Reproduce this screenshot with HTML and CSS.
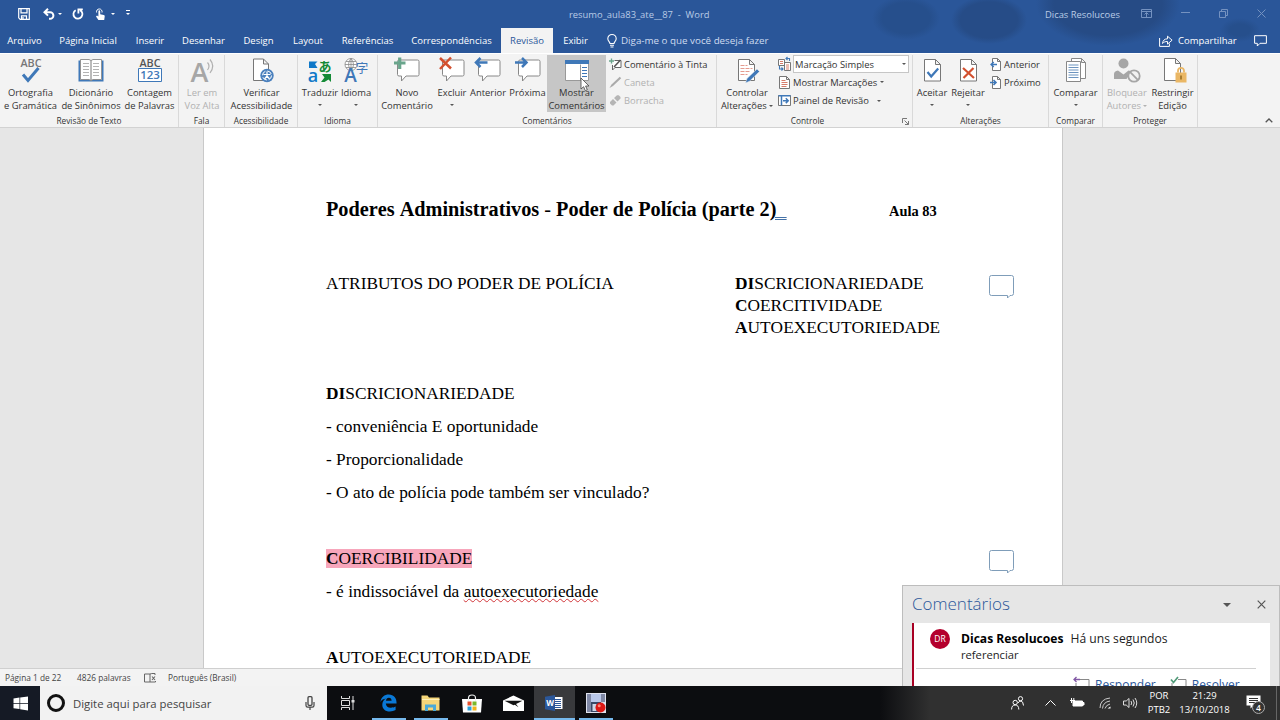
FILE: index.html
```html
<!DOCTYPE html>
<html lang="pt-BR">
<head>
    <meta charset="UTF-8">
    <meta name="viewport" content="width=device-width, initial-scale=1.0">
    <title>resumo_aula83_ate__87 - Word</title>
    <link rel="stylesheet" href="styles.css">
</head>
<body>
    <!-- Title bar and ribbon tabs -->
    <div class="top">
        <header class="titlebar">
            <div class="quick">
                <svg class="q-save" width="12" height="12" viewBox="0 0 12 12"><path d="M.7.7h10.6v10.6H2.2L.7 9.8z M3 .7v4.1h6V.7 M3.5 11.3V7.8h5v3.5 M5 9v2" fill="none" stroke="#fff" stroke-width="1.2"/></svg>
                <svg class="q-undo" width="12" height="12" viewBox="0 0 12 12"><path d="M1.500 4.200h5.600a3.300 3.300 0 0 1 0 6.600H6 M5 .8L1.500 4.200 5 7.600" fill="none" stroke="#fff" stroke-width="2"/></svg>
                <i class="caret"></i>
                <svg class="q-redo" width="12" height="12" viewBox="0 0 12 12"><path d="M3.700 2.200A4.500 4.500 0 1 0 8 2.100 M6.400 5.600V1.400h4.400" fill="none" stroke="#fff" stroke-width="1.800"/></svg>
                <svg class="q-touch" width="11" height="13" viewBox="0 0 11 13"><path d="M3.400 12L1 8.400l1-.9 1.400 1V3.200c0-1.200 1.800-1.200 1.800 0v3l3.600.9c.8.2 1 .7.9 1.400L9.200 12z" fill="#fff"/><path d="M1.600 4.500a2.800 2.800 0 1 1 5.400 0" fill="none" stroke="#fff"/></svg>
                <i class="caret"></i>
                <i class="caret more"></i>
            </div>
            <div class="doc-name">resumo_aula83_ate__87&nbsp; -&nbsp; Word</div>
            <div class="user">Dicas Resolucoes</div>
            <div class="window-buttons">
                <svg width="11" height="9" viewBox="0 0 11 9"><path d="M.5.5h10v8H.5z M.5 2.500h10 M5.500 8V4 M3.500 5.500l2-2 2 2" fill="none" stroke="currentColor"/></svg>
                <svg width="9" height="9" viewBox="0 0 9 9"><path d="M0 3.500h9" stroke="currentColor"/></svg>
                <svg width="9" height="9" viewBox="0 0 9 9"><path d="M.5 2.500h6v6h-6z M2.500 2.500v-2h6v6h-2" fill="none" stroke="currentColor"/></svg>
                <svg width="9" height="9" viewBox="0 0 9 9"><path d="M.5.5l8 8 M8.500.5l-8 8" stroke="currentColor"/></svg>
            </div>
        </header>
        <nav class="tabs">
            <a class="tab w-arquivo">Arquivo</a>
            <a class="tab w-inicial">Página Inicial</a>
            <a class="tab w-inserir">Inserir</a>
            <a class="tab w-desenhar">Desenhar</a>
            <a class="tab w-design">Design</a>
            <a class="tab w-layout">Layout</a>
            <a class="tab w-ref">Referências</a>
            <a class="tab w-corr">Correspondências</a>
            <a class="tab w-rev active">Revisão</a>
            <a class="tab w-exibir">Exibir</a>
            <a class="tell-me">
                <svg width="10" height="14" viewBox="0 0 10 14"><path d="M3 9.500C3 8 .8 7 .8 4.700a4.200 4.200 0 0 1 8.400 0C9.200 7 7 8 7 9.500z M3 11.300h4 M3.500 13h3" fill="none" stroke="#fff" stroke-width="1.100"/></svg>
                Diga-me o que você deseja fazer
            </a>
            <a class="share">
                <svg width="14" height="12" viewBox="0 0 14 12"><path d="M.6 3v8.400h9.800V8.500 M3.500 8.500c.3-3 2-4.700 5-4.700V1.200l4.600 4-4.600 3.900V6.500c-2.300 0-3.600.5-5 2z" fill="none" stroke="#fff"/></svg>
                Compartilhar
            </a>
            <a class="notes"><svg width="13" height="12" viewBox="0 0 13 12"><path d="M.6.7h11.800v7.600H6l-2.700 2.700V8.300H.6z" fill="none" stroke="#fff"/></svg></a>
        </nav>
    </div>

    <!-- Ribbon -->
    <section class="ribbon">
        <div class="group g-texto">
            <div class="tools">
                <div class="tool b61">
                    <svg width="26" height="26" viewBox="0 0 26 26"><text x="13" y="9.500" class="abc gray">ABC</text><path d="M5 17.500l5 6L20.500 11" fill="none" stroke="#3f78b8" stroke-width="3"/></svg>
                    <span>Ortografia<br>e Gramática</span>
                </div>
                <div class="tool b60">
                    <svg width="26" height="26" viewBox="0 0 26 26"><path d="M.5 3.500H2v19h22v-19h1.500v21H.5z" fill="#3f78b8"/><path d="M2.500 2.500H11l2 1 2-1h8.500v20H15l-2 1-2-1H2.500z" fill="#fff" stroke="#888" stroke-width=".9"/><path d="M13 3.500v20" stroke="#777"/><path d="M5 6.500h6M5 9.500h6M5 12.500h6M5 15.500h6M5 18.500h6M15 6.500h6M15 9.500h6M15 12.500h6M15 15.500h6M15 18.500h6" stroke="#aaa" stroke-width=".9"/></svg>
                    <span>Dicionário<br>de Sinônimos</span>
                </div>
                <div class="tool b57">
                    <svg width="26" height="26" viewBox="0 0 26 26"><text x="13" y="9.500" class="abc dark">ABC</text><path d="M1.500 11.500h23v13h-23z" fill="#fff" stroke="#3f78b8"/><text x="13" y="22.300" class="abc blue">123</text></svg>
                    <span>Contagem<br>de Palavras</span>
                </div>
            </div>
            <div class="caption">Revisão de Texto</div>
        </div>

        <div class="group g-fala">
            <div class="tools">
                <div class="tool b46 off">
                    <svg width="26" height="26" viewBox="0 0 26 26"><text x="10.500" y="25" class="big-a">A</text><path d="M18.500 5.500q3 3.500 0 7.500 M21 2.500q5.500 6.500 0 13.500" fill="none" stroke="#b0b0b0" stroke-width="1.200"/></svg>
                    <span>Ler em<br>Voz Alta</span>
                </div>
            </div>
            <div class="caption">Fala</div>
        </div>

        <div class="group g-acess">
            <div class="tools">
                <div class="tool b73">
                    <svg width="26" height="26" viewBox="0 0 26 26"><path d="M4.500 2h10l5 5v16.500h-15z M14.500 2v5h5" fill="#fff" stroke="#777"/><circle cx="18" cy="18.500" r="6.700" fill="#4a80bd"/><circle cx="18" cy="18.500" r="4.500" fill="none" stroke="#fff" stroke-dasharray="5 2"/><path d="M18 14.500v4.500 M14.500 17.500h7 M18 19l-2.500 3 M18 19l2.500 3" stroke="#fff" stroke-width="1.200"/></svg>
                    <span>Verificar<br>Acessibilidade</span>
                </div>
            </div>
            <div class="caption">Acessibilidade</div>
        </div>

        <div class="group g-idioma">
            <div class="tools">
                <div class="tool b38">
                    <svg width="26" height="26" viewBox="0 0 26 26"><path d="M2 4.500h8.500l-2.500 2.500 2.500 4H2z" fill="#0f78c8"/><path d="M15 17h9v8l-2.500-2.500-4 2.500H14l3.500-4.500z" fill="#138a36"/><text x="18" y="13.500" class="kana">あ</text><text x="6" y="24.500" class="lat-a">a</text></svg>
                    <span>Traduzir</span><i class="caret"></i>
                </div>
                <div class="tool b34">
                    <svg width="26" height="26" viewBox="0 0 26 26"><circle cx="8" cy="7.500" r="6" fill="#fff" stroke="#888" stroke-width=".8"/><path d="M2 7.500h12M8 1.500v12M3 4.500h10M3 10.500h10M8 1.500q-5 6 0 12M8 1.500q5 6 0 12" fill="none" stroke="#888" stroke-width=".8"/><text x="7.500" y="24.500" class="idiom-a">A</text><text x="19" y="15.500" class="kanji">字</text></svg>
                    <span>Idioma</span><i class="caret"></i>
                </div>
            </div>
            <div class="caption">Idioma</div>
        </div>

        <div class="group g-coment">
            <div class="tools">
                <div class="tool b58">
                    <svg width="28" height="26" viewBox="0 0 28 26"><path d="M4.500 4.500q0-1.500 1.500-1.500h18.500q1.500 0 1.500 1.500v13q0 1.500-1.500 1.500H13l-4.500 5v-5H6q-1.500 0-1.500-1.500z" fill="#fff" stroke="#888"/><path d="M1 6h11.500 M6.700.5v11.500" stroke="#69a58c" stroke-width="3.200"/></svg>
                    <span>Novo<br>Comentário</span>
                </div>
                <div class="tool b32">
                    <svg width="28" height="26" viewBox="0 0 28 26"><path d="M4.500 4.500q0-1.500 1.500-1.500h18.500q1.500 0 1.500 1.500v13q0 1.500-1.500 1.500H13l-4.500 5v-5H6q-1.500 0-1.500-1.500z" fill="#fff" stroke="#888"/><path d="M2 1l11 10.500 M13 .5L2 12" stroke="#d3502f" stroke-width="2.500"/></svg>
                    <span>Excluir</span><i class="caret"></i>
                </div>
                <div class="tool b40">
                    <svg width="28" height="26" viewBox="0 0 28 26"><path d="M4.500 4.500q0-1.500 1.500-1.500h18.500q1.500 0 1.500 1.500v13q0 1.500-1.500 1.500H13l-4.500 5v-5H6q-1.500 0-1.500-1.500z" fill="#fff" stroke="#888"/><path d="M2 5.500h11.500 M6.500 1L2 5.500 6.500 10" fill="none" stroke="#3f78b8" stroke-width="2.500"/></svg>
                    <span>Anterior</span>
                </div>
                <div class="tool b39">
                    <svg width="28" height="26" viewBox="0 0 28 26"><path d="M4.500 4.500q0-1.500 1.500-1.500h18.500q1.500 0 1.500 1.500v13q0 1.500-1.500 1.500H13l-4.500 5v-5H6q-1.500 0-1.500-1.500z" fill="#fff" stroke="#888"/><path d="M1 5.500h11.500 M8 1l4.500 4.500L8 10" fill="none" stroke="#3f78b8" stroke-width="2.500"/></svg>
                    <span>Próxima</span>
                </div>
                <div class="tool b59 pressed">
                    <svg width="26" height="26" viewBox="0 0 26 26"><path d="M1.500 3.500h23v20h-23z" fill="#fff" stroke="#999"/><path d="M1 3h24v4H1z" fill="#3f78b8"/><path d="M16.500 7.500v16" stroke="#999"/><path d="M18 10.500h5M18 13.500h5M18 16.500h5M18 19.500h5" stroke="#3f78b8"/></svg>
                    <span>Mostrar<br>Comentários</span>
                    <svg class="pointer" width="11" height="15" viewBox="0 0 11 15"><path d="M1 1v11l2.600-2.300 1.700 4 2-.9-1.700-3.800H9z" fill="#fff" stroke="#444" stroke-width=".8"/></svg>
                </div>
                <div class="side s-tinta">
                    <div class="row"><svg width="13" height="13" viewBox="0 0 13 13"><path d="M5.500 2.500H12v7H6l-2.500 2.500V7" fill="#fff" stroke="#666"/><path d="M0 3h5M2.500.5v5" stroke="#69a58c" stroke-width="1.300"/><path d="M5 9l6.500-7" stroke="#555" stroke-width="1.500"/></svg>Comentário à Tinta</div>
                    <div class="row off"><svg width="13" height="13" viewBox="0 0 13 13"><path d="M.5 12l2-3.500L10.800.8l1.400 1.400L4 10z" fill="#aaa"/></svg>Caneta</div>
                    <div class="row off"><svg width="13" height="13" viewBox="0 0 13 13"><path d="M1 8l3-3 3.500 3.500-3 3H3L1 9.500z M5 4l3-2.800h1.700L11.500 3v1.500l-3 3z" fill="#b5b5b5"/></svg>Borracha</div>
                </div>
            </div>
            <div class="caption">Comentários</div>
        </div>

        <div class="group g-controle">
            <div class="tools">
                <div class="tool b60">
                    <svg width="26" height="26" viewBox="0 0 26 26"><path d="M4.500 2.500h11l5 5v16h-16z M15.500 2.500v5h5" fill="#fff" stroke="#777"/><path d="M6.500 8.500h7M6.500 11.500h12M6.500 14.500h9M6.500 17.500h7" stroke="#e59b8f" stroke-dasharray="4 1"/><path d="M11.500 26l1.500-4.500L23 12l2.500 2.500-10 9.700z" fill="#3f78b8" stroke="#f3f3f3" stroke-width=".5"/></svg>
                    <span>Controlar<br>Alterações <i class="caret inline"></i></span>
                </div>
                <div class="side s-controle">
                    <div class="row"><svg width="13" height="14" viewBox="0 0 13 14"><path d="M.5 2.500h6v6h-6z M6.500 5.500h6v8h-6z" fill="#fff" stroke="#777"/><path d="M2 4.500h3M2 6.500h3M8 8h3M8 10h3M8 12h3" stroke="#d77c6b"/><path d="M1.500 9v3h3 M3.500 10.500L5 12l-1.500 1.500 M11.500 4V1.500h-3 M9.500 0L8 1.500 9.500 3" fill="none" stroke="#3f78b8" stroke-width="1.100"/></svg>
                        <div class="combo">Marcação Simples<i class="caret"></i></div></div>
                    <div class="row"><svg width="13" height="13" viewBox="0 0 13 13"><path d="M1.500.5h7l3 3v9h-10z M8.500.5v3h3" fill="#fff" stroke="#777"/><path d="M3.500 4.500h4M3.500 6.500h6M3.500 8.500h6M3.500 10.500h5" stroke="#d77c6b"/></svg>Mostrar Marcações<i class="caret"></i></div>
                    <div class="row"><svg width="13" height="13" viewBox="0 0 13 13"><path d="M.5 1.500h12v10H.5z" fill="#fff" stroke="#777"/><path d="M.5 1.800h12M3.500 2v9.500" stroke="#3f78b8" stroke-width="1.500"/><path d="M5 6.700h5M7.800 4.300l2.400 2.400-2.400 2.400" fill="none" stroke="#3f78b8" stroke-width="1.500"/></svg>Painel de Revisão<i class="caret far"></i></div>
                </div>
            </div>
            <div class="caption with-launcher">Controle
                <svg class="launcher" width="7" height="7" viewBox="0 0 7 7"><path d="M.5 5V.5H5 M2.500 2.500l4 4 M6.500 3v3.500H3" fill="none" stroke="#777"/></svg>
            </div>
        </div>

        <div class="group g-alter">
            <div class="tools">
                <div class="tool b36">
                    <svg width="26" height="26" viewBox="0 0 26 26"><path d="M5.500 2.500h11l5 5v16.500h-16z M16.500 2.500v5h5" fill="#fff" stroke="#777"/><path d="M8.500 15l3.700 4.500 7-8" fill="none" stroke="#3f78b8" stroke-width="2.200"/></svg>
                    <span>Aceitar</span><i class="caret"></i>
                </div>
                <div class="tool b36">
                    <svg width="26" height="26" viewBox="0 0 26 26"><path d="M5.500 2.500h11l5 5v16.500h-16z M16.500 2.500v5h5" fill="#fff" stroke="#777"/><path d="M8 11l11 10M18.500 11L8.500 21" stroke="#d3502f" stroke-width="2.200"/></svg>
                    <span>Rejeitar</span><i class="caret"></i>
                </div>
                <div class="side s-alter">
                    <div class="row"><svg width="12" height="13" viewBox="0 0 12 13"><path d="M2.500.5h5l3 3v9h-8z M7.500.5v3h3" fill="#fff" stroke="#777"/><path d="M1 6.500h6M3.700 4L1.200 6.500 3.700 9" fill="none" stroke="#3f78b8" stroke-width="1.600"/></svg>Anterior</div>
                    <div class="row"><svg width="12" height="13" viewBox="0 0 12 13"><path d="M2.500.5h5l3 3v9h-8z M7.500.5v3h3" fill="#fff" stroke="#777"/><path d="M0 6.500h6M3.500 4L6 6.500 3.500 9" fill="none" stroke="#3f78b8" stroke-width="1.600"/></svg>Próximo</div>
                </div>
            </div>
            <div class="caption">Alterações</div>
        </div>

        <div class="group g-comparar">
            <div class="tools">
                <div class="tool b53">
                    <svg width="26" height="26" viewBox="0 0 26 26"><path d="M8.500 1.500h10l4 4v16h-14z M18.500 1.500v4h4" fill="#fff" stroke="#888"/><path d="M3.500 4.500h14v20h-14z" fill="#fff" stroke="#888"/><path d="M5.500 8h10M5.500 10.500h10M5.500 13h10M5.500 15.500h10M5.500 18h10M5.500 20.500h10" stroke="#6d94bf"/></svg>
                    <span>Comparar</span><i class="caret"></i>
                </div>
            </div>
            <div class="caption">Comparar</div>
        </div>

        <div class="group g-proteger">
            <div class="tools">
                <div class="tool b46 off">
                    <svg width="28" height="26" viewBox="0 0 28 26"><circle cx="10.500" cy="6.500" r="5" fill="#a6a6a6"/><path d="M1 22v-5q0-3 4-3.500l5.500 4 5-4q2 .2 3 1.500l-5 7z" fill="#a6a6a6"/><circle cx="21" cy="19" r="5.700" fill="#f3f3f3" stroke="#a6a6a6" stroke-width="1.800"/><path d="M17.200 15.200l7.600 7.600" stroke="#a6a6a6" stroke-width="1.800"/></svg>
                    <span>Bloquear<br>Autores <i class="caret inline"></i></span>
                </div>
                <div class="tool b45">
                    <svg width="28" height="26" viewBox="0 0 28 26"><path d="M5.500 1.500h11l5 5v17h-16z M16.500 1.500v5h5" fill="#fff" stroke="#777"/><path d="M19 15.500v-1.700a3 3 0 0 1 6 0v1.700" fill="none" stroke="#eab765" stroke-width="1.800"/><path d="M16.500 15.500h11v10h-11z" fill="#eab765"/><path d="M22 18.500v4" stroke="#8a6218" stroke-width="1.400"/></svg>
                    <span>Restringir<br>Edição</span>
                </div>
            </div>
            <div class="caption">Proteger</div>
        </div>
        <svg class="collapse" width="8" height="5" viewBox="0 0 8 5"><path d="M.7 4.300L4 1l3.300 3.300" fill="none" stroke="#555" stroke-width="1.300"/></svg>
    </section>

    <!-- Document -->
    <main class="canvas">
        <article class="page">
            <div class="heading">
                <h1>Poderes Administrativos <b class="thin">-</b> Poder de Polícia (parte 2<span class="grammar">)&nbsp;&nbsp;</span></h1>
                <b>Aula 83</b>
            </div>
            <div class="columns">
                <div>ATRIBUTOS DO PODER DE POLÍCIA</div>
                <div><b>DI</b>SCRICIONARIEDADE<br><b>C</b>OERCITIVIDADE<br><b>A</b>UTOEXECUTORIEDADE</div>
            </div>
            <p><b>DI</b>SCRICIONARIEDADE</p>
            <p>- conveniência E oportunidade</p>
            <p>- Proporcionalidade</p>
            <p>- O ato de polícia pode também ser vinculado?</p>
            <p>&nbsp;</p>
            <p><mark><b>C</b>OERCIBILIDADE</mark></p>
            <p>- é indissociável da <span class="typo">autoexecutoriedade</span></p>
            <p>&nbsp;</p>
            <p><b>A</b>UTOEXECUTORIEDADE</p>
            <svg class="balloon first" width="25" height="25" viewBox="0 0 25 25"><path d="M2.500.5h20q2 0 2 2v16q0 2-2 2h-1.500L18.500 23v-2.500h-16q-2 0-2-2v-16q0-2 2-2z" fill="#fff" stroke="#7f9db9"/></svg>
            <svg class="balloon second" width="25" height="25" viewBox="0 0 25 25"><path d="M2.500.5h20q2 0 2 2v16q0 2-2 2h-1.500L18.500 23v-2.500h-16q-2 0-2-2v-16q0-2 2-2z" fill="#fff" stroke="#7f9db9"/></svg>
        </article>
    </main>

    <!-- Comments pane -->
    <aside class="pane">
        <div class="pane-head">
            <h2>Comentários</h2>
            <i class="caret"></i>
            <svg width="9" height="9" viewBox="0 0 9 9"><path d="M.7.7l7.600 7.600M8.300.7L.7 8.300" stroke="#555" stroke-width="1.200"/></svg>
        </div>
        <div class="card">
            <div class="comment">
                <div class="avatar">DR</div>
                <div>
                    <div class="who"><b>Dicas Resolucoes</b> Há uns segundos</div>
                    <div class="said">referenciar</div>
                </div>
            </div>
            <div class="actions">
                <a><svg width="17" height="16" viewBox="0 0 17 16"><path d="M6 3.500h10v10H3V7" fill="none" stroke="#888"/><path d="M1 3.500h6M3.500 1L1 3.500 3.500 6" fill="none" stroke="#8259a5" stroke-width="1.300"/></svg>Responder</a>
                <a><svg width="17" height="16" viewBox="0 0 17 16"><path d="M8 3.500h8v10H2V7" fill="none" stroke="#888"/><path d="M1 3.500L3.500 6.500 8 1" fill="none" stroke="#4f9a77" stroke-width="1.700"/></svg>Resolver</a>
            </div>
        </div>
    </aside>

    <!-- Status bar -->
    <footer class="status">
        <span class="st-page">Página 1 de 22</span>
        <span class="st-words">4826 palavras</span>
        <svg width="12" height="10" viewBox="0 0 12 10"><path d="M6 1H.5v8H6V1q1-.7 5-.5v1.500 M6 9h5.500V8" fill="none" stroke="#666"/><path d="M8 3.500l3 3.500M11 3.500L8 7" stroke="#666" stroke-width="1.100"/></svg>
        <span>Português (Brasil)</span>
    </footer>

    <!-- Taskbar -->
    <div class="taskbar">
        <div class="start"><svg width="15" height="15" viewBox="0 0 15 15"><path d="M.5 2.500l6-.9v5.400h-6z M7.200 1.500L15 .4V7H7.200z M.5 7.700h6v5.400l-6-.9z M7.200 7.700H15v6.700l-7.800-1.100z" fill="#fff"/></svg></div>
        <div class="search">
            <i class="cortana"></i>
            <span>Digite aqui para pesquisar</span>
            <svg width="10" height="15" viewBox="0 0 10 15"><rect x="3" y=".7" width="4" height="8.600" rx="1" fill="none" stroke="#444" stroke-width="1.300"/><path d="M1 6v3.500q0 1.700 1.700 1.700h4.600Q9 11.200 9 9.500V6 M5 11v3" fill="none" stroke="#444" stroke-width="1.200"/></svg>
        </div>
        <div class="apps">
            <div class="app"><svg width="15" height="14" viewBox="0 0 15 14"><path d="M1.500 0v2.500h8V0 M1.500 4.500h8v5h-8z M1.500 14v-2.500h8V14 M13 0v14" fill="none" stroke="#ddd"/><path d="M11.500 4h3v2.500h-3z" fill="#ddd"/></svg></div>
            <div class="app open"><svg width="17" height="18" viewBox="0 0 17 18"><path d="M.5 8C1 3 4.500.4 8.800.4c5 0 8 3.600 7.800 9.100H5.800c.2 2.800 2.200 4.200 5 4.200 1.900 0 3.400-.4 4.800-1.200v3.600c-1.700.9-3.500 1.400-5.700 1.400-5 0-7.600-3-7.600-6.800 0-2.700 1.500-4.900 3.700-6.100C3.500 5 1.600 6 .5 8z M6 6.700h5.600c0-1.800-1-2.900-2.700-2.900C7.200 3.800 6.200 5 6 6.700z" fill="#0a78d6" fill-rule="evenodd"/></svg></div>
            <div class="app open"><svg width="19" height="16" viewBox="0 0 19 16"><path d="M.5.5h6l1.500 2h10.500v13H.5z" fill="#f5d679"/><path d="M1 4.500h17.500" stroke="#fff0b8"/><path d="M4 16V9.500h11V16h-3v-3.500H7V16z" fill="#4aa9d8"/></svg></div>
            <div class="app"><svg width="20" height="19" viewBox="0 0 20 19"><path d="M0 5h20l-1 13.500H1z" fill="#fff"/><path d="M6.500 7V4q0-3 3.500-3t3.500 3v3" fill="none" stroke="#eee" stroke-width="1.200"/><path d="M5.500 7.500h4v4h-4z" fill="#e7502c"/><path d="M10.500 7.500h4v4h-4z" fill="#7cb829"/><path d="M5.500 12.500h4v4h-4z" fill="#2aa0da"/><path d="M10.500 12.500h4v4h-4z" fill="#f3b51b"/></svg></div>
            <div class="app"><svg width="21" height="16" viewBox="0 0 21 16"><path d="M0 5.500L10.500.5 21 5.500V16H0z" fill="#fff"/><path d="M1.500 5.800h18L13 9l2.500 3.200-3.700-2.500-1.300.6z" fill="#111"/></svg></div>
            <div class="app open current"><svg width="18" height="16" viewBox="0 0 18 16"><path d="M9 2h8.500v12H9z" fill="#fff"/><path d="M10 4.500h6M10 6.500h6M10 8.500h6M10 10.500h6M10 12.500h6" stroke="#2b579a"/><path d="M0 1.800L10 0v16L0 14.200z" fill="#2b579a"/><text x="5" y="11.300" class="w">W</text></svg></div>
            <div class="app open"><svg width="20" height="20" viewBox="0 0 20 20"><path d="M0 0h20v20H0z" fill="#dfe3ee"/><path d="M1 1h4v18H1z M15 1h4v8h-4z" fill="#7f88a5"/><path d="M5 1h10v8H5z" fill="#b9c8ea"/><path d="M5 9h10v10H5z" fill="#384866"/><path d="M6.500 11h4v7h-4z" fill="#cdd5e6"/><circle cx="14.500" cy="14.500" r="5" fill="#dc1714"/><circle cx="13.200" cy="12.700" r="1.500" fill="#ff8578"/></svg></div>
        </div>
        <div class="tray">
            <svg class="t-people" width="13" height="14" viewBox="0 0 13 14"><circle cx="4.200" cy="6.500" r="2.200" fill="none" stroke="#fff"/><path d="M.6 13.500q0-4.500 3.600-4.500t3.600 4.500" fill="none" stroke="#fff"/><circle cx="9.500" cy="2.700" r="2.100" fill="none" stroke="#fff"/><path d="M7 7q1-2 3-2t2.500 4.500" fill="none" stroke="#fff"/></svg>
            <svg class="t-up" width="11" height="6" viewBox="0 0 11 6"><path d="M.5 5.500l5-5 5 5" fill="none" stroke="#fff"/></svg>
            <svg class="t-bat" width="14" height="10" viewBox="0 0 14 10"><path d="M3 3h9.500v5H3z M13 4.500h1v2.500h-1z" fill="#fff" stroke="#fff"/><path d="M0 2.500h5M1.500 0v5M3.800 0v3" stroke="#fff"/></svg>
            <svg class="t-wifi" width="12" height="12" viewBox="0 0 12 12"><path d="M1 11Q1 2 11 1 M3.500 11.500Q4 5 11 4 M6 11.500Q7 8 11 7" fill="none" stroke="#ccc"/><path d="M8.500 11.500l3-2v2z" fill="#fff"/></svg>
            <svg class="t-vol" width="14" height="12" viewBox="0 0 14 12"><path d="M.5 4h2.700L6 1.500v9L3.200 8H.5z M8 4q1.500 2 0 4 M10 2.500q2.500 3.500 0 7 M12 1q3.500 5 0 10" fill="none" stroke="#ddd"/></svg>
            <div class="lang">POR<br>PTB2</div>
            <div class="clock">21:29<br>13/10/2018</div>
            <div class="center">
                <svg width="15" height="14" viewBox="0 0 15 14"><path d="M.5.5h14v10H7.500l-3 3v-3h-4z" fill="#fff"/><path d="M3 3.500h9M3 5.500h9M3 7.500h6" stroke="#333"/></svg>
                <span class="badge">4</span>
            </div>
        </div>
    </div>
</body>
</html>
```
FILE: styles.css
```css
* {
    box-sizing: border-box;
}
body {
    margin: 0;
    width: 1280px;
    height: 720px;
    overflow: hidden;
    position: relative;
    display: flex;
    flex-direction: column;
    font-family: "Open Sans", "Noto Sans", sans-serif;
    font-size: 9.4px;
    color: #333;
    background: #e6e6e6;
}
svg {
    display: block;
    flex: none;
    overflow: visible;
}
.caret {
    flex: none;
    width: 0;
    height: 0;
    border: 2.5px solid transparent;
    border-top-color: #555;
    border-bottom: 0;
}
.caret.inline {
    display: inline-block;
    vertical-align: 2px;
}

/* title bar */
.top {
    flex: none;
    background:
        radial-gradient(ellipse 34px 22px at 906px 18px, #264f8c 70%, transparent),
        radial-gradient(ellipse 38px 24px at 989px 20px, #264c87 75%, transparent),
        radial-gradient(ellipse 72px 42px at 1108px 4px, #264b85 75%, transparent),
        radial-gradient(ellipse 20px 12px at 1240px 30px, #264f8c 50%, transparent),
        #2a5699;
}
.titlebar {
    height: 28px;
    display: flex;
    align-items: center;
    color: #b9cbe6;
}
.quick {
    display: flex;
    align-items: center;
    width: 569px;
    padding-left: 18px;
}
.quick .caret {
    border-top-color: #fff;
    margin-left: 3px;
}
.q-undo {
    margin-left: 13px;
}
.q-redo {
    margin-left: 10px;
}
.q-touch {
    margin-left: 11px;
}
.quick .q-touch + .caret {
    margin-left: 5px;
}
.quick .more {
    position: relative;
    margin-left: 11px;
}
.more::before {
    content: "";
    position: absolute;
    left: -2px;
    top: -5px;
    width: 4px;
    height: 1px;
    background: #fff;
}
.doc-name {
    width: 476px;
}
.user {
    width: 96px;
}
.window-buttons {
    flex: 1;
    display: flex;
    align-items: center;
    gap: 29px;
    padding-bottom: 2px;
    color: #7592c0;
}

/* tabs */
.tabs {
    height: 25px;
    display: flex;
    font-size: 9.5px;
    line-height: 26px;
    color: #fff;
}
.tab {
    text-align: center;
    white-space: nowrap;
}
.w-arquivo { width: 49px; }
.w-inicial { width: 78px; }
.w-inserir { width: 46px; }
.w-desenhar { width: 61px; }
.w-design { width: 49px; }
.w-layout { width: 50px; }
.w-ref { width: 69px; }
.w-corr { width: 99px; }
.w-rev { width: 52px; }
.w-exibir { width: 45px; }
.tab.active {
    color: #2b579a;
    background: #f3f3f3;
}
.tell-me, .share, .notes {
    display: flex;
    align-items: center;
}
.tell-me {
    gap: 4px;
    width: 551px;
    padding-left: 9px;
    font-size: 9.8px;
    color: #cfdcf0;
}
.share {
    gap: 5px;
    width: 96px;
    padding-left: 10px;
}
.notes {
    padding-left: 9px;
}

/* ribbon */
.ribbon {
    height: 75px;
    flex: none;
    display: flex;
    position: relative;
    padding-top: 2px;
    background: #f3f3f3;
    border-bottom: 1px solid #d2d2d2;
    box-shadow: inset 0 1px #fff;
}
.group {
    display: flex;
    flex-direction: column;
    border-right: 1px solid #d9d9d9;
}
.g-texto { width: 179px; }
.g-fala { width: 46px; }
.g-acess { width: 73px; }
.g-idioma { width: 80px; }
.g-coment { width: 339px; }
.g-controle { width: 196px; }
.g-alter { width: 136px; }
.g-comparar { width: 54px; }
.g-proteger { width: 95px; }
.tools {
    display: flex;
    height: 60px;
}
.g-idioma .tools {
    padding-left: 3px;
}
.g-alter .tools, .g-proteger .tools {
    padding-left: 1px;
}
.tool {
    flex: none;
    display: flex;
    flex-direction: column;
    align-items: center;
    height: 57px;
    padding-top: 2px;
    line-height: 13px;
    text-align: center;
    white-space: nowrap;
}
.tool span {
    margin-top: 3px;
}
.tool > .caret {
    margin-top: 5px;
}
.b32 { width: 32px; }
.b34 { width: 34px; }
.b36 { width: 36px; }
.b38 { width: 38px; }
.b39 { width: 39px; }
.b40 { width: 40px; }
.b45 { width: 45px; }
.b46 { width: 46px; }
.b53 { width: 53px; }
.b57 { width: 57px; }
.b58 { width: 58px; }
.b59 { width: 59px; }
.b60 { width: 60px; }
.b61 { width: 61px; }
.b73 { width: 73px; }
.off {
    color: #b1b1b1;
}
.off .caret {
    border-top-color: #b1b1b1;
}
.pressed {
    position: relative;
    background: #c6c6c6;
}
.pointer {
    position: absolute;
    left: 33px;
    top: 22px;
}
.side {
    display: flex;
    flex-direction: column;
    white-space: nowrap;
}
.row {
    display: flex;
    align-items: center;
    gap: 2px;
    height: 18.3px;
}
.row > .caret {
    margin-left: 1px;
}
.row > .far {
    margin-left: 6px;
}
.s-tinta {
    padding-left: 3px;
}
.s-controle {
    padding-left: 1px;
}
.s-alter {
    padding-left: 4px;
}
.combo {
    display: flex;
    align-items: center;
    justify-content: space-between;
    width: 116px;
    height: 18px;
    padding: 0 2px 0 1px;
    background: #fff;
    border: 1px solid #c6c6c6;
}
.caption {
    position: relative;
    font-size: 8.3px;
    line-height: 12px;
    text-align: center;
}
.with-launcher {
    padding-right: 14px;
}
.launcher {
    position: absolute;
    right: 3px;
    top: 3px;
}
.collapse {
    position: absolute;
    right: 7px;
    bottom: 4px;
}

/* lettering inside the icons */
.abc {
    font: 600 10.8px "Open Sans", sans-serif;
    text-anchor: middle;
}
.gray { fill: #777; }
.dark { fill: #555; }
.blue {
    font-size: 11.5px;
    fill: #3f78b8;
}
.big-a {
    font: 600 27px "Open Sans", sans-serif;
    text-anchor: middle;
    fill: #a6a6a6;
}
.kana {
    font: 700 13px "Noto Sans CJK JP", sans-serif;
    text-anchor: middle;
    fill: #138a36;
}
.lat-a {
    font: 600 18px "Open Sans", sans-serif;
    text-anchor: middle;
    fill: #0f78c8;
}
.idiom-a {
    font: 600 19px "Open Sans", sans-serif;
    text-anchor: middle;
    fill: #3f78b8;
}
.kanji {
    font: 12.5px "Noto Sans CJK JP", sans-serif;
    text-anchor: middle;
    fill: #3f78b8;
}
.w {
    font: 700 8px "Open Sans", sans-serif;
    text-anchor: middle;
    fill: #fff;
}

/* document */
.canvas {
    flex: 1;
    min-height: 0;
    overflow: hidden;
    padding-left: 203px;
}
.page {
    position: relative;
    width: 860px;
    height: 700px;
    padding: 65px 0 0 122px;
    background: #fff;
    border: solid #c9c9c9;
    border-width: 0 1px;
    font-family: "Liberation Serif", serif;
    font-size: 17.33px;
    font-kerning: none;
    color: #000;
}
.heading {
    display: flex;
    align-items: baseline;
    height: 80px;
    font-size: 14.4px;
}
.heading h1 {
    width: 563px;
    margin: 0;
    font-size: 20.25px;
    line-height: 32px;
}
.thin {
    font-weight: normal;
}
.grammar {
    text-decoration: underline double #4472a8 1px;
    text-underline-offset: 1px;
}
.columns {
    display: flex;
    height: 103.7px;
    line-height: 21.9px;
}
.columns div:first-child {
    width: 409px;
}
.page p {
    margin: 0;
    line-height: 33.1px;
}
mark {
    background: #f7a6bb;
    color: inherit;
}
.typo {
    text-decoration: underline wavy #d13438 1px;
    text-underline-offset: 1px;
}
.balloon {
    position: absolute;
    left: 785px;
}
.first { top: 147px; }
.second { top: 422px; }

/* comments pane */
.pane {
    position: absolute;
    left: 902px;
    top: 585px;
    width: 378px;
    height: 101px;
    overflow: hidden;
    padding-left: 9px;
    background: #e6e6e6;
    border: 1px solid #bdbdbd;
    border-bottom: 0;
    z-index: 1;
}
.pane-head {
    display: flex;
    align-items: center;
    height: 37px;
}
.pane-head h2 {
    width: 311px;
    margin: 0;
    padding-bottom: 2px;
    font-size: 17px;
    font-weight: 300;
    color: #2b579a;
}
.pane-head .caret {
    border-width: 4px 4px 0;
    margin-right: 26px;
}
.card {
    width: 358px;
    height: 90px;
    background: #fff;
    border-left: 2px solid #a80023;
    color: #222;
}
.comment {
    display: flex;
    width: 340px;
    height: 46px;
    margin-left: 2px;
    padding: 6px 0 0 14px;
    border-bottom: 1px solid #d0d0d0;
}
.avatar {
    width: 20px;
    height: 20px;
    margin-right: 11px;
    border-radius: 50%;
    background: #b4002d;
    color: #fff;
    font-size: 8.5px;
    line-height: 20px;
    text-align: center;
}
.who {
    font-size: 12.1px;
    line-height: 20px;
}
.who b {
    margin-right: 4px;
    color: #000;
}
.said {
    font-size: 11.2px;
    line-height: 12px;
}
.actions {
    display: flex;
    gap: 14px;
    padding: 7px 0 0 159px;
    font-size: 12px;
    line-height: 18px;
    color: #2b579a;
}
.actions a {
    display: flex;
    gap: 5px;
}

/* status bar */
.status {
    height: 18px;
    flex: none;
    display: flex;
    align-items: center;
    padding-left: 5px;
    font-size: 8.3px;
    color: #444;
    background: #f3f3f3;
    border-top: 1px solid #cfcfcf;
}
.st-page {
    width: 72px;
}
.st-words {
    width: 67px;
}
.status svg {
    margin-right: 12px;
}

/* taskbar */
.taskbar {
    height: 34px;
    flex: none;
    display: flex;
    background: linear-gradient(90deg, #0c0d10 0 880px, #303030 930px);
    color: #fff;
}
.start {
    width: 40px;
    display: flex;
    align-items: center;
    justify-content: center;
    background: #151a25;
}
.search {
    width: 287px;
    display: flex;
    align-items: center;
    padding: 0 12px 0 7px;
    background: #f2f2f2;
    color: #444;
    font-size: 11.35px;
}
.cortana {
    width: 18px;
    height: 18px;
    border: 3px solid #111;
    border-radius: 50%;
    margin-right: 8px;
}
.search span {
    flex: 1;
}
.apps {
    display: flex;
    gap: .4px;
}
.app {
    width: 41px;
    display: flex;
    align-items: center;
    justify-content: center;
    position: relative;
}
.open::after {
    content: "";
    position: absolute;
    left: 4px;
    right: 3px;
    bottom: 0;
    height: 2px;
    background: #76b9ed;
}
.current {
    background: #38393c;
}
.current::after {
    left: 0;
    right: 0;
}
.tray {
    flex: 1;
    display: flex;
    align-items: center;
    justify-content: flex-end;
    padding-right: 3px;
    line-height: 14px;
    font-size: 9.5px;
    text-align: center;
}
.t-up { margin-left: 21px; }
.t-bat { margin-left: 14px; }
.t-wifi { margin-left: 15px; }
.t-vol { margin-left: 12px; }
.lang {
    width: 40px;
    padding-left: 4px;
}
.clock {
    width: 55px;
}
.center {
    position: relative;
    width: 45px;
    height: 34px;
    padding: 9px 0 0 14px;
    border-right: 1px solid #666;
}
.badge {
    position: absolute;
    left: 20px;
    top: 15px;
    width: 13px;
    height: 13px;
    border: 1px solid #aaa;
    border-radius: 50%;
    background: #333;
    font-size: 8.5px;
    font-weight: 600;
    line-height: 11px;
}
```
